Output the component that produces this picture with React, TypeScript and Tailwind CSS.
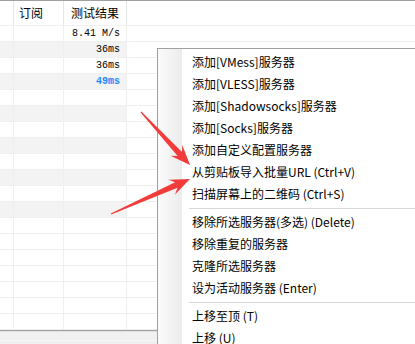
import type { ReactNode } from "react";

type Row = { result?: string; fast?: boolean };

const ROWS: Row[] = [
  { result: "8.41 M/s" },
  { result: "36ms" },
  { result: "36ms" },
  { result: "49ms", fast: true },
  {}, {}, {}, {}, {}, {}, {}, {},
  {}, {}, {}, {}, {}, {}, {},
];
const DATA_ROWS = 12;

type MenuEntry = string | null; // null = separator

const MENU: MenuEntry[] = [
  "添加[VMess]服务器",
  "添加[VLESS]服务器",
  "添加[Shadowsocks]服务器",
  "添加[Socks]服务器",
  "添加自定义配置服务器",
  "从剪贴板导入批量URL (Ctrl+V)",
  "扫描屏幕上的二维码 (Ctrl+S)",
  null,
  "移除所选服务器(多选) (Delete)",
  "移除重复的服务器",
  "克隆所选服务器",
  "设为活动服务器 (Enter)",
  null,
  "上移至顶 (T)",
  "上移 (U)",
];

function arrowPoints(x1: number, y1: number, x2: number, y2: number) {
  const dx = x2 - x1;
  const dy = y2 - y1;
  const len = Math.hypot(dx, dy);
  const ux = dx / len;
  const uy = dy / len;
  const px = -uy;
  const py = ux;
  const pt = (back: number, side: number) =>
    `${(x2 - ux * back + px * side).toFixed(1)},${(y2 - uy * back + py * side).toFixed(1)}`;
  return [
    pt(len, 0.6),
    pt(15, 3),
    pt(20, 8),
    pt(0, 0),
    pt(20, -8),
    pt(15, -3),
    pt(len, -0.6),
  ].join(" ");
}

function Cell({ className, children }: { className: string; children?: ReactNode }) {
  return <div className={className}>{children}</div>;
}

export default function App() {
  return (
    <div className="relative w-[415px] h-[344px] overflow-hidden bg-white font-['Noto_Sans_CJK_SC',sans-serif] text-[12px] text-black">
      {/* server list */}
      <div className="flex flex-col">
        <div className="h-px bg-[#a0a0a0]" />
        <div className="grid grid-cols-[14px_50px_63px_1fr] h-[25px] border-b border-[#f0f0f0]">
          <Cell className="border-r border-[#e5e5e5]" />
          <Cell className="border-r border-[#e5e5e5] pl-[5px] pt-[4px] leading-[16px]">订阅</Cell>
          <Cell className="border-r border-[#e5e5e5] pr-[7px] pt-[4px] leading-[16px] text-right">测试结果</Cell>
          <Cell className="" />
        </div>
        {ROWS.map((row, i) => {
          const shade = i < DATA_ROWS && i % 2 === 1 ? "bg-[#f3f3f3]" : "bg-white";
          return (
            <div
              key={i}
              className="grid grid-cols-[14px_50px_63px_1fr] h-[16px] border-b border-[#efefef]"
            >
              <Cell className={`border-r border-[#efefef] ${shade}`} />
              <Cell className={`border-r border-[#efefef] ${shade}`} />
              <Cell
                className={`border-r border-[#efefef] ${shade} pr-[6px] text-right font-['Liberation_Mono',monospace] text-[10px] leading-[15px] ${
                  row.fast ? "font-bold text-[#1e88ff]" : "text-black"
                }`}
              >
                {row.result}
              </Cell>
              <Cell className="" />
            </div>
          );
        })}
        <div className="h-px bg-[#a0a0a0]" />
        <div className="h-[13px] bg-[#f0f0f0] border-t border-[#e2e2e2] flex flex-col justify-end">
          <div className="h-[4px] border-t border-[#f7f7f7]" />
        </div>
      </div>

      {/* context menu */}
      <div className="absolute left-[157px] top-[48px] w-[300px] h-[320px] border border-[#a0a0a0] bg-white flex">
        <div className="w-[24px] shrink-0 bg-linear-to-r from-[#fbfbfb] to-[#ececec]" />
        <div className="flex-1 flex flex-col pt-[2px]">
          {MENU.map((entry, i) =>
            entry === null ? (
              <div key={i} className="h-[6px] pl-[7px] flex items-center">
                <div className="h-px w-full bg-[#d7d7d7]" />
              </div>
            ) : (
              <div key={i} className="h-[22px] pl-[10px] flex items-center whitespace-nowrap">
                {entry}
              </div>
            )
          )}
        </div>
      </div>

      {/* annotation arrows */}
      <svg
        className="absolute inset-0 pointer-events-none"
        width={415}
        height={344}
        viewBox="0 0 415 344"
      >
        <polygon points={arrowPoints(141, 112, 190, 165)} fill="#f23c3c" />
        <polygon points={arrowPoints(111, 214, 190, 179)} fill="#f23c3c" />
      </svg>
    </div>
  );
}
